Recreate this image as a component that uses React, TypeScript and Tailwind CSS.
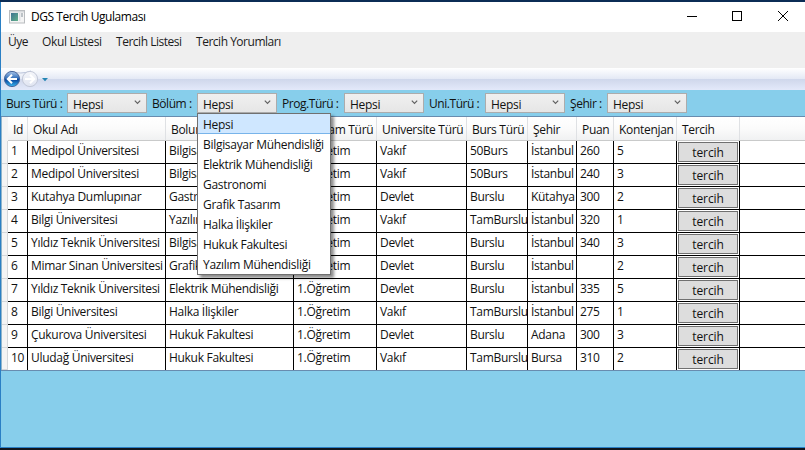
const COLS = 'grid grid-cols-[20px_138px_128px_83px_90px_61px_49px_37px_63px_63px_1fr]';

const headers = [
  'Id',
  'Okul Adı',
  'Bolum Adı',
  'Program Türü',
  'Universite Türü',
  'Burs Türü',
  'Şehir',
  'Puan',
  'Kontenjan',
  'Tercih',
];

const rows: string[][] = [
  ['1', 'Medipol Üniversitesi', 'Bilgisayar Mühendisliği', '1.Öğretim', 'Vakıf', '50Burs', 'İstanbul', '260', '5'],
  ['2', 'Medipol Üniversitesi', 'Bilgisayar Mühendisliği', '1.Öğretim', 'Vakıf', '50Burs', 'İstanbul', '240', '3'],
  ['3', 'Kutahya Dumlupınar', 'Gastronomi', '1.Öğretim', 'Devlet', 'Burslu', 'Kütahya', '300', '2'],
  ['4', 'Bilgi Üniversitesi', 'Yazılım Mühendisliği', '1.Öğretim', 'Vakıf', 'TamBurslu', 'İstanbul', '320', '1'],
  ['5', 'Yıldız Teknik Üniversitesi', 'Bilgisayar Mühendisliği', '1.Öğretim', 'Devlet', 'Burslu', 'İstanbul', '340', '3'],
  ['6', 'Mimar Sinan Üniversitesi', 'Grafik Tasarım', '1.Öğretim', 'Devlet', 'Burslu', 'İstanbul', '', '2'],
  ['7', 'Yıldız Teknik Üniversitesi', 'Elektrik Mühendisliği', '1.Öğretim', 'Devlet', 'Burslu', 'İstanbul', '335', '5'],
  ['8', 'Bilgi Üniversitesi', 'Halka İlişkiler', '1.Öğretim', 'Vakıf', 'TamBurslu', 'İstanbul', '275', '1'],
  ['9', 'Çukurova Üniversitesi', 'Hukuk Fakultesi', '1.Öğretim', 'Devlet', 'Burslu', 'Adana', '300', '3'],
  ['10', 'Uludağ Üniversitesi', 'Hukuk Fakultesi', '1.Öğretim', 'Vakıf', 'TamBurslu', 'Bursa', '310', '2'],
];

const options = [
  'Hepsi',
  'Bilgisayar Mühendisliği',
  'Elektrik Mühendisliği',
  'Gastronomi',
  'Grafik Tasarım',
  'Halka İlişkiler',
  'Hukuk Fakultesi',
  'Yazılım Mühendisliği',
];

const filters = [
  { label: 'Burs Türü :', width: 'w-[66px]' },
  { label: 'Bölüm :', width: 'w-[50px]', open: true },
  { label: 'Prog.Türü :', width: 'w-[67px]' },
  { label: 'Uni.Türü :', width: 'w-[61px]' },
  { label: 'Şehir :', width: 'w-[42px]' },
];

function TitleBar() {
  return (
    <div className="flex h-[30px] shrink-0 items-center bg-white pl-2">
      <svg width="16" height="14" viewBox="0 0 16 14" className="shrink-0">
        <defs>
          <linearGradient id="appGreen" x1="0" y1="0" x2="1" y2="1">
            <stop offset="0" stopColor="#3e7391" />
            <stop offset="1" stopColor="#63b08b" />
          </linearGradient>
        </defs>
        <rect x="0.5" y="0.5" width="15" height="12.5" fill="#f4f4f4" stroke="#b9bcbf" />
        <rect x="1" y="1" width="14" height="1.5" fill="#d5d8db" />
        <rect x="2" y="3" width="7" height="8" fill="url(#appGreen)" />
        <rect x="10" y="3" width="1.5" height="8" fill="#dfe2e5" />
        <rect x="12" y="3" width="2" height="4" fill="#bcc2c6" />
      </svg>
      <span className="ml-[6px] grow tracking-[-0.45px] text-black">DGS Tercih Ugulaması</span>
      <svg width="118" height="30" viewBox="0 0 118 30" className="shrink-0" fill="none" stroke="#000">
        <path d="M0 14.5H10" shapeRendering="crispEdges" />
        <path d="M45.5 9.5H54.5V18.5H45.5Z" shapeRendering="crispEdges" />
        <path d="M91 9L101 19M101 9L91 19" />
      </svg>
    </div>
  );
}

function MenuBar() {
  return (
    <div className="flex h-[36px] shrink-0 items-start bg-[#efefef] pl-[7px] pt-[2px] leading-[16px] tracking-[-0.48px] text-[#1c1c1c]">
      <span className="w-[34px]">Üye</span>
      <span className="w-[74px] tracking-[-0.35px]">Okul Listesi</span>
      <span className="w-[80px]">Tercih Listesi</span>
      <span>Tercih Yorumları</span>
    </div>
  );
}

function NavBar() {
  return (
    <div className="h-[22px] shrink-0 bg-[linear-gradient(#ffffff_0%,#e4e9f5_49%,#cfd7eb_50%,#e3e9fa_100%)]">
      <svg width="60" height="22" viewBox="0 0 60 22">
        <defs>
          <linearGradient id="backBtn" x1="0" y1="0" x2="0" y2="1">
            <stop offset="0" stopColor="#a9c5ea" />
            <stop offset="0.45" stopColor="#326fba" />
            <stop offset="0.55" stopColor="#08459d" />
            <stop offset="1" stopColor="#39b8f2" />
          </linearGradient>
          <linearGradient id="fwdBtn" x1="0" y1="0" x2="0" y2="1">
            <stop offset="0" stopColor="#f5f6fa" />
            <stop offset="1" stopColor="#dfe4f1" />
          </linearGradient>
        </defs>
        <path d="M9 3Q20 7 30 3" fill="none" stroke="#b9c3da" />
        <circle cx="11" cy="11" r="7.6" fill="url(#backBtn)" stroke="#48679d" />
        <path d="M16 11H7M11 6.8L6.8 11L11 15.2" fill="none" stroke="#fff" strokeWidth="2" />
        <circle cx="29" cy="11" r="7.6" fill="url(#fwdBtn)" stroke="#c2c8d8" />
        <path d="M24 11H33M29 6.8L33.2 11L29 15.2" fill="none" stroke="#fff" strokeWidth="2" />
        <path d="M41 10H47L44 13.2Z" fill="#2385b3" />
      </svg>
    </div>
  );
}

function Combo({ open }: { open?: boolean }) {
  return (
    <div className="relative">
      <div className="flex h-[20px] w-[80px] justify-between overflow-hidden border border-[#acacac] bg-gradient-to-b from-[#f0f0f0] to-[#e6e6e6] pl-[5px] pr-[5px]">
        <span className="mt-[2px] leading-[17px]">Hepsi</span>
        <svg width="7" height="5" viewBox="0 0 7 5" className="mt-[6px]" fill="none" stroke="#606060" strokeWidth="1.2">
          <path d="M0.8 0.7L3.5 3.4L6.2 0.7" />
        </svg>
      </div>
      {open && (
        <div className="absolute left-0 top-[20px] z-10 w-[134px] border border-[#707070] bg-white shadow-[3px_3px_3px_rgba(0,0,0,0.45)]">
          {options.map((o, i) => (
            <div
              key={o}
              className={
                i === 0
                  ? 'h-[20px] whitespace-nowrap border-b border-[#78b4ea] bg-[#cfe7ff] pl-[5px] leading-[22px]'
                  : 'h-[20px] whitespace-nowrap pl-[5px] leading-[22px]'
              }
            >
              {o}
            </div>
          ))}
        </div>
      )}
    </div>
  );
}

function FilterBar() {
  return (
    <div className="flex h-[26px] shrink-0 bg-[#87ceeb] pt-[3px]">
      {filters.map((f) => (
        <div key={f.label} className="flex">
          <span className={`${f.width} shrink-0 whitespace-nowrap pl-[5px] leading-[22px] tracking-[-0.45px]`}>{f.label}</span>
          <Combo open={f.open} />
        </div>
      ))}
    </div>
  );
}

function Grid() {
  return (
    <div className="flex shrink-0 border-b border-t border-[#688caf] bg-white">
      <div className="w-[7px] shrink-0 border-l border-[#8fb5cc] bg-[#f4f4f4] pt-[24px]">
        {rows.map((r) => (
          <div key={r[0]} className="h-[23px] border-b border-r border-[#d4d7da] last:h-[22px]" />
        ))}
      </div>
      <div className="grow">
        <div className={`${COLS} h-[24px] border-b border-[#c9caca] bg-gradient-to-b from-white via-[#fbfbfb] to-[#f0f1f2]`}>
          {headers.map((h) => (
            <div key={h} className="overflow-hidden whitespace-nowrap border-r border-[#dfe1e4] pl-[5px] leading-[25px] text-[#111]">
              {h}
            </div>
          ))}
        </div>
        {rows.map((r, n) => (
          <div key={r[0]} className={n === 9 ? `${COLS} h-[22px]` : `${COLS} h-[23px] border-b border-black`}>
            {r.map((c, i) => (
              <div key={i} className="overflow-hidden whitespace-nowrap border-r border-black pl-[3px] leading-[19px]">
                {c}
              </div>
            ))}
            <div className="border-r border-black p-px">
              <div className="h-[20px] w-[60px] border border-[#707070] bg-[#dddddd] text-center leading-[20px] tracking-[-0.1px]">tercih</div>
            </div>
            <div />
          </div>
        ))}
      </div>
    </div>
  );
}

export default function App() {
  return (
    <div className="flex h-[450px] w-[805px] flex-col overflow-hidden bg-[#11151c] font-['Open_Sans','Noto_Sans',sans-serif] text-[12px] tracking-[-0.3px] text-[#111]">
      <div className="h-[2px] shrink-0 bg-[#0b2c55]" />
      <div className="flex h-[446px] shrink-0 flex-col border-b border-l border-[#2a7fc4] bg-[#87ceeb]">
        <TitleBar />
        <MenuBar />
        <NavBar />
        <FilterBar />
        <Grid />
      </div>
    </div>
  );
}
